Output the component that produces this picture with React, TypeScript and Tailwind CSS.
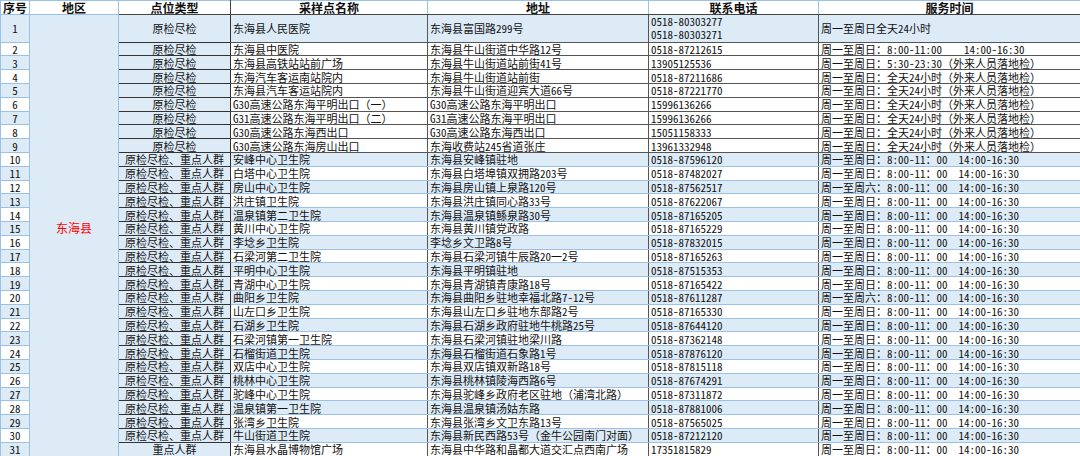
type Row = {
  type: string
  name: string
  addr: string
  phone: string[]
  time: string
}

const A = "周一至周日：全天24小时（外来人员落地检）"
const W = "周一至周日：8:00-11：00  14:00-16:30"
const S = "周一至周六：8:00-11：00  14:00-16:30"
const T = "原检尽检"
const K = "原检尽检、重点人群"

const rows: Row[] = [
  { type: T, name: "东海县人民医院", addr: "东海县富国路299号", phone: ["0518-80303277", "0518-80303271"], time: "周一至周日全天24小时" },
  { type: T, name: "东海县中医院", addr: "东海县牛山街道中华路12号", phone: ["0518-87212615"], time: "周一至周日：8:00-11:00    14:00-16:30" },
  { type: T, name: "东海县高铁站站前广场", addr: "东海县牛山街道站前街41号", phone: ["13905125536"], time: "周一至周日：5:30-23:30（外来人员落地检）" },
  { type: T, name: "东海汽车客运南站院内", addr: "东海县牛山街道站前街", phone: ["0518-87211686"], time: A },
  { type: T, name: "东海县汽车客运站院内", addr: "东海县牛山街道迎宾大道66号", phone: ["0518-87221770"], time: A },
  { type: T, name: "G30高速公路东海平明出口（一）", addr: "G30高速公路东海平明出口", phone: ["15996136266"], time: A },
  { type: T, name: "G31高速公路东海平明出口（二）", addr: "G31高速公路东海平明出口", phone: ["15996136266"], time: A },
  { type: T, name: "G30高速公路东海西出口", addr: "G30高速公路东海西出口", phone: ["15051158333"], time: A },
  { type: T, name: "G30高速公路东海房山出口", addr: "东海收费站245省道张庄", phone: ["13961332948"], time: A },
  { type: K, name: "安峰中心卫生院", addr: "东海县安峰镇驻地", phone: ["0518-87596120"], time: W },
  { type: K, name: "白塔中心卫生院", addr: "东海县白塔埠镇双拥路203号", phone: ["0518-87482027"], time: W },
  { type: K, name: "房山中心卫生院", addr: "东海县房山镇上泉路120号", phone: ["0518-87562517"], time: S },
  { type: K, name: "洪庄镇卫生院", addr: "东海县洪庄镇同心路33号", phone: ["0518-87622067"], time: W },
  { type: K, name: "温泉镇第二卫生院", addr: "东海县温泉镇鲧泉路30号", phone: ["0518-87165205"], time: W },
  { type: K, name: "黄川中心卫生院", addr: "东海县黄川镇党政路", phone: ["0518-87165229"], time: W },
  { type: K, name: "李埝乡卫生院", addr: "李埝乡文卫路8号", phone: ["0518-87832015"], time: W },
  { type: K, name: "石梁河第二卫生院", addr: "东海县石梁河镇牛辰路20一2号", phone: ["0518-87165263"], time: W },
  { type: K, name: "平明中心卫生院", addr: "东海县平明镇驻地", phone: ["0518-87515353"], time: W },
  { type: K, name: "青湖中心卫生院", addr: "东海县青湖镇青康路18号", phone: ["0518-87165422"], time: W },
  { type: K, name: "曲阳乡卫生院", addr: "东海县曲阳乡驻地幸福北路7-12号", phone: ["0518-87611287"], time: S },
  { type: K, name: "山左口乡卫生院", addr: "东海县山左口乡驻地东部路2号", phone: ["0518-87165330"], time: W },
  { type: K, name: "石湖乡卫生院", addr: "东海县石湖乡政府驻地牛桃路25号", phone: ["0518-87644120"], time: W },
  { type: K, name: "石梁河镇第一卫生院", addr: "东海县石梁河镇驻地梁川路", phone: ["0518-87362148"], time: W },
  { type: K, name: "石榴街道卫生院", addr: "东海县石榴街道石象路1号", phone: ["0518-87876120"], time: W },
  { type: K, name: "双店中心卫生院", addr: "东海县双店镇双新路18号", phone: ["0518-87815118"], time: W },
  { type: K, name: "桃林中心卫生院", addr: "东海县桃林镇陵海西路6号", phone: ["0518-87674291"], time: W },
  { type: K, name: "驼峰中心卫生院", addr: "东海县驼峰乡政府老区驻地（浦湾北路）", phone: ["0518-87311872"], time: W },
  { type: K, name: "温泉镇第一卫生院", addr: "东海县温泉镇汤姑东路", phone: ["0518-87881006"], time: W },
  { type: K, name: "张湾乡卫生院", addr: "东海县张湾乡文卫东路13号", phone: ["0518-87565025"], time: W },
  { type: K, name: "牛山街道卫生院", addr: "东海县新民西路53号（金牛公园南门对面）", phone: ["0518-87212120"], time: W },
  { type: "重点人群", name: "东海县水晶博物馆广场", addr: "东海县中华路和晶都大道交汇点西南广场", phone: ["17351815829"], time: W },
]

const font = { fontFamily: '"Noto Sans Mono CJK SC", "Noto Sans CJK SC", sans-serif' }

export default function App() {
  return (
    <div className="w-[1080px] h-[456px] overflow-hidden bg-white text-[#111]" style={font}>
      <table className="w-[1080px] table-fixed border-collapse text-[11px] leading-[12px]">
        <colgroup>
          <col className="w-[29px]" />
          <col className="w-[89px]" />
          <col className="w-[112px]" />
          <col className="w-[197px]" />
          <col className="w-[221px]" />
          <col className="w-[170px]" />
          <col className="w-[262px]" />
        </colgroup>
        <thead>
          <tr className="h-[14px] font-bold text-[12px]">
            <th className="p-0 border border-[#9bc2e6] text-center whitespace-nowrap">序号</th>
            <th className="p-0 border border-[#9bc2e6] text-center">地区</th>
            <th className="p-0 border border-[#444] border-t-[#9bc2e6] text-center">点位类型</th>
            <th className="p-0 border border-[#9bc2e6] border-b-[#444] text-center">采样点名称</th>
            <th className="p-0 border border-[#9bc2e6] border-b-[#444] text-center">地址</th>
            <th className="p-0 border border-[#9bc2e6] border-b-[#444] text-center">联系电话</th>
            <th className="p-0 border border-[#9bc2e6] border-b-[#444] text-center">服务时间</th>
          </tr>
        </thead>
        <tbody>
          {rows.map((r, i) => {
            const n = i + 1
            const first = n === 1
            const early = n <= 9
            const idxBg = n % 2 === 1 ? "bg-[#ddebf7]" : "bg-white"
            const bodyBg = first || (n >= 10 && n % 2 === 0) ? "bg-[#ddebf7]" : "bg-white"
            const bodyBorder = early
              ? "border border-[#555]"
              : "border border-x-[#555] border-y-[#9bc2e6]"
            const cell = `p-0 pl-[2px] whitespace-nowrap overflow-hidden ${bodyBg} ${bodyBorder}`
            return (
              <tr key={n} className={first ? "h-[27.6px]" : "h-[13.8px]"}>
                <td className={`p-0 text-center border border-[#9bc2e6] ${idxBg}`}>{n}</td>
                {first && (
                  <td rowSpan={31} className="p-0 pb-[14px] text-center align-middle bg-[#ddebf7] border border-[#9bc2e6] text-[#ff0000] text-[12px]">
                    东海县
                  </td>
                )}
                <td className="p-0 text-center whitespace-nowrap bg-[#ddebf7] border border-[#333]">{r.type}</td>
                <td className={cell}>{r.name}</td>
                <td className={cell}>{r.addr}</td>
                <td className={cell}>
                  {r.phone.map((p) => (
                    <div key={p} className={first ? "leading-[13px]" : ""}>{p}</div>
                  ))}
                </td>
                <td className={`${cell} whitespace-pre`}>{r.time}</td>
              </tr>
            )
          })}
        </tbody>
      </table>
    </div>
  )
}
